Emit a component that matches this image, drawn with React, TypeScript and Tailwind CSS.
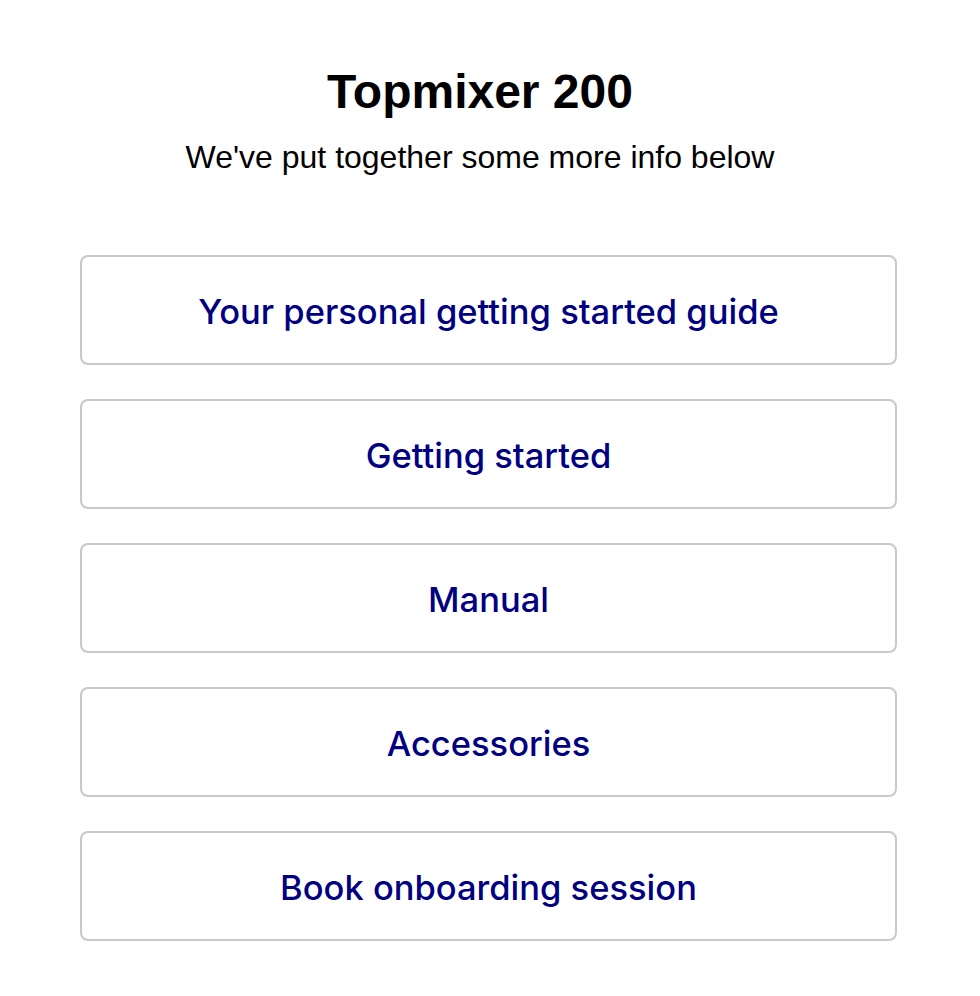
import React from 'react';

const links = [
  'Your personal getting started guide',
  'Getting started',
  'Manual',
  'Accessories',
  'Book onboarding session',
];

const App: React.FC = () => {
  return (
    <div className="min-h-screen bg-white pl-20 pr-[83px] pt-[62px] font-['Liberation_Sans',Arial,sans-serif]">
      {/* Header */}
      <div className="pr-[17px] text-center">
        <h1 className="text-[48px] font-bold leading-[60px] text-black">Topmixer 200</h1>
        <p className="mt-[15px] text-[32px] leading-[40px] text-black">We've put together some more info below</p>
      </div>

      {/* Link cards */}
      <div className="mt-[78px] flex flex-col gap-[34px]">
        {links.map((label) => (
          <a
            key={label}
            href="#"
            className="flex h-[110px] items-center justify-center rounded-lg border-2 border-[#c8c8c8] bg-white pt-1 font-['Inter',sans-serif] text-[34.5px] font-medium text-[#000080]"
          >
            {label}
          </a>
        ))}
      </div>
    </div>
  );
};

export default App;
